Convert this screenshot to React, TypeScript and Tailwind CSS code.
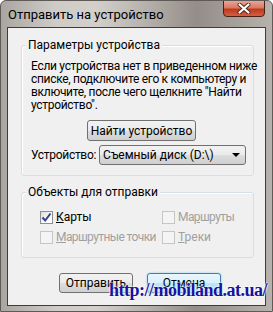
import React from "react";

function CheckBox({ checked, disabled }: { checked?: boolean; disabled?: boolean }) {
  return (
    <div
      className={
        "w-[13px] h-[13px] border flex items-center justify-center shrink-0 " +
        (disabled
          ? "border-[#c6c6c6] bg-[#f4f4f4]"
          : "border-[#8e8f8f] bg-[linear-gradient(135deg,#dcdcdc,#ffffff_70%)]")
      }
    >
      {checked && (
        <svg width="11" height="11" viewBox="0 0 11 11">
          <path d="M1.5 5.5 L4.2 8.5 L9.5 1.5" fill="none" stroke="#31428f" strokeWidth="2" />
        </svg>
      )}
    </div>
  );
}

function Btn({ children, def }: { children: React.ReactNode; def?: boolean }) {
  return (
    <div
      className={
        "w-[74px] h-[20px] rounded-[3px] border flex items-center justify-center leading-none " +
        (def
          ? "border-[#3c7fb1] bg-[linear-gradient(#eaf6fd_0%,#d9f0fc_50%,#bee6fd_51%,#a7d9f5_100%)] shadow-[0_0_2px_#6fc3ee]"
          : "border-[#707070] bg-[linear-gradient(#f2f2f2_0%,#ebebeb_50%,#dddddd_51%,#cfcfcf_100%)]")
      }
    >
      {children}
    </div>
  );
}

export default function App() {
  return (
    <div className="w-[273px] h-[312px] relative overflow-hidden font-['Roboto',sans-serif] text-[12px] text-black rounded-t-[6px] border border-[#5f5a56] bg-[linear-gradient(90deg,#a9a5a1_0%,#cfccc8_20%,#d3d0cc_35%,#b3aea9_55%,#958d87_72%,#a59f99_86%,#b7b2ad_100%)]">
      {/* title bar */}
      <div className="h-[26px] flex items-start justify-between pl-[7px] pr-[7px]">
        <span className="mt-[6px] leading-[16px] text-[13px]">Отправить на устройство</span>
        <div className="w-[42px] h-[17px] -mt-[1px] rounded-b-[4px] border border-[#4a1f16] bg-[linear-gradient(#e9a596_0%,#d97a62_45%,#c1391e_55%,#d2603f_100%)] flex items-center justify-center">
          <svg width="14" height="11" viewBox="0 0 14 11">
            <path d="M2.5 1.5 L11.5 9.5 M11.5 1.5 L2.5 9.5" stroke="#4a2a22" strokeWidth="4" strokeLinecap="round" />
            <path d="M2.5 1.5 L11.5 9.5 M11.5 1.5 L2.5 9.5" stroke="#ffffff" strokeWidth="2.2" strokeLinecap="round" />
          </svg>
        </div>
      </div>

      {/* client area */}
      <div className="ml-[6px] w-[259px] h-[279px] border border-[#3d3d3d] bg-[#f0f0f0] pt-[17px] pl-[13px] flex flex-col">
        {/* group 1 */}
        <div className="relative w-[233px] h-[131px] rounded-[3px] border border-[#d5dfe5] shadow-[inset_1px_1px_0_#ffffff] pt-[14px] pl-[9px] pr-[7px] flex flex-col">
          <span className="absolute -top-[9px] left-[4px] px-[2px] bg-[#f0f0f0] leading-[16px]">Параметры устройства</span>
          <div className="leading-[13px] whitespace-nowrap tracking-[-0.3px]">
            Если устройства нет в приведенном ниже
            <br />
            списке, подключите его к компьютеру и
            <br />
            включите, после чего щелкните "Найти
            <br />
            устройство".
          </div>
          <div className="mt-[8px] ml-[56px] w-[109px] h-[21px] rounded-[3px] border border-[#707070] bg-[linear-gradient(#f2f2f2_0%,#ebebeb_50%,#dddddd_51%,#cfcfcf_100%)] flex items-center justify-center leading-none">
            Найти устройство
          </div>
          <div className="mt-[4px] flex items-center h-[20px] gap-[3px]">
            <span className="leading-none whitespace-nowrap tracking-[-0.3px]">Устройство:</span>
            <div className="flex-1 h-[20px] rounded-[3px] border border-[#707070] bg-[linear-gradient(#f2f2f2_0%,#ebebeb_50%,#dddddd_51%,#cfcfcf_100%)] flex items-center justify-between pl-[3px] pr-[5px]">
              <span className="leading-none whitespace-nowrap">Съемный диск (D:\)</span>
              <svg width="8" height="4" viewBox="0 0 8 4">
                <path d="M0 0 L8 0 L4 4 Z" fill="#000" />
              </svg>
            </div>
          </div>
        </div>

        {/* group 2 */}
        <div className="relative mt-[16px] w-[233px] h-[66px] rounded-[3px] border border-[#d5dfe5] shadow-[inset_1px_1px_0_#ffffff] pt-[14px] pl-[18px] flex flex-col">
          <span className="absolute -top-[9px] left-[4px] px-[2px] bg-[#f0f0f0] leading-[16px]">Объекты для отправки</span>
          <div className="flex h-[20px] items-center">
            <div className="w-[122px] flex items-center gap-[3px]">
              <CheckBox checked />
              <span className="leading-none whitespace-nowrap"><span className="underline">К</span>арты</span>
            </div>
            <div className="flex items-center gap-[3px] text-[#a0a0a0]">
              <CheckBox disabled />
              <span className="leading-none whitespace-nowrap tracking-[-0.6px]">Ма<span className="underline">р</span>шруты</span>
            </div>
          </div>
          <div className="flex h-[20px] items-center">
            <div className="w-[122px] flex items-center gap-[3px] text-[#a0a0a0]">
              <CheckBox disabled />
              <span className="leading-none whitespace-nowrap tracking-[-0.6px]"><span className="underline">М</span>аршрутные точки</span>
            </div>
            <div className="flex items-center gap-[3px] text-[#a0a0a0]">
              <CheckBox disabled />
              <span className="leading-none whitespace-nowrap"><span className="underline">Т</span>реки</span>
            </div>
          </div>
        </div>

        {/* buttons */}
        <div className="mt-[15px] ml-[38px] flex gap-[14px]">
          <Btn>Отправить</Btn>
          <Btn def>Отмена</Btn>
        </div>
      </div>

      {/* watermark */}
      <div className="absolute left-[108px] top-[278px] font-['Liberation_Serif',serif] font-bold text-[18px] tracking-[-0.5px] leading-[22px] text-[#1414a0] [text-shadow:0_0_2px_#ffffff,0_0_2px_#ffffff,0_0_1px_#ffffff]">
        http://mobiland.at.ua/
      </div>
    </div>
  );
}
